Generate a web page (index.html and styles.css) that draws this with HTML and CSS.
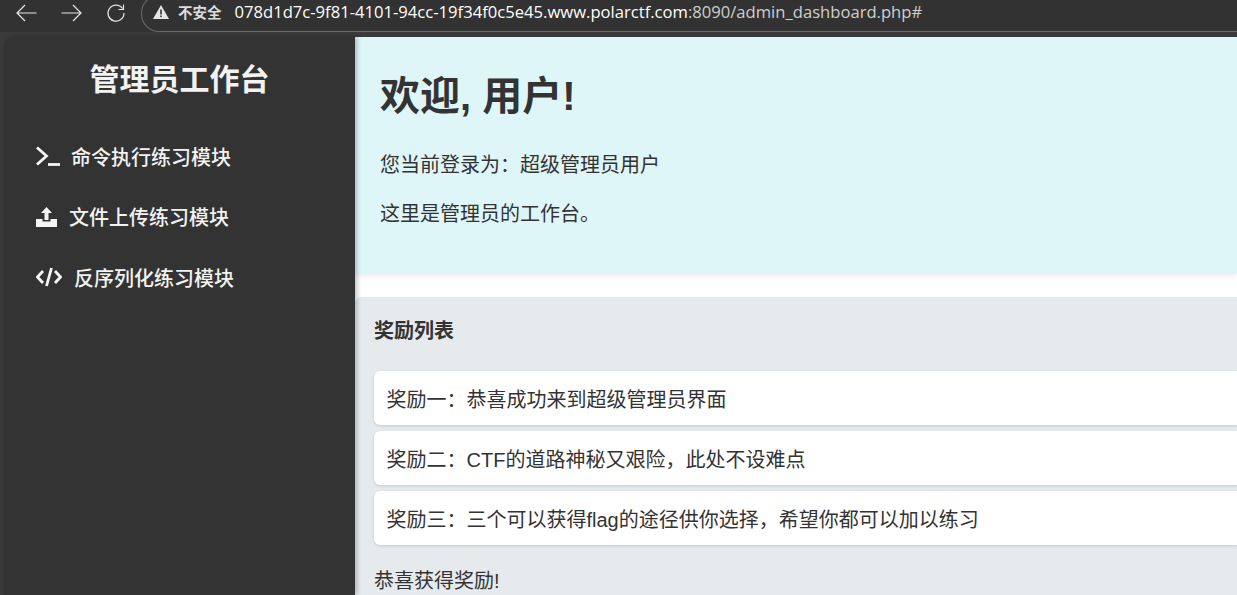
FILE: index.html
```html
<!DOCTYPE html>
<html lang="zh-CN">
<head>
<meta charset="utf-8">
<title>管理员工作台</title>
<link rel="stylesheet" href="styles.css">
</head>
<body>
<header class="toolbar">
  <nav class="nav-buttons">
    <svg class="nav-icon" viewBox="0 0 22 18"><path d="M21 9H1.500M9.500 1 1.500 9l8 8"/></svg>
    <svg class="nav-icon" viewBox="0 0 22 18"><path d="M1 9h19.500M12.500 1l8 8-8 8"/></svg>
    <svg class="nav-icon reload" viewBox="0 0 20 20"><path d="M16.500 5.500A8 8 0 1 0 18 10M17.500 1.500v5h-5"/></svg>
  </nav>
  <div class="omnibox">
    <svg class="warn" viewBox="0 0 16 14"><path d="M8 0 16 14H0Z"/><rect class="warn-mark" x="7.200" y="4.500" width="1.600" height="5"/><rect class="warn-mark" x="7.200" y="10.500" width="1.600" height="1.600"/></svg>
    <span class="insecure">不安全</span>
    <span class="url"><b class="host">078d1d7c-9f81-4101-94cc-19f34f0c5e45.www.polarctf.com</b>:8090/admin_dashboard.php#</span>
  </div>
</header>
<div class="app">
  <aside class="sidebar">
    <h2 class="brand">管理员工作台</h2>
    <ul class="menu">
      <li class="menu-item">
        <svg class="menu-icon" viewBox="0 0 24 20"><path class="stroke" d="M1 1.500l9.500 8.500L1 18.500"/><path class="stroke" d="M12 18.500h12"/></svg>
        <span class="label-a">命令执行练习模块</span>
      </li>
      <li class="menu-item">
        <svg class="menu-icon" viewBox="0 0 21 20"><path d="M10.500 0 16 6h-3.500v7h-4V6H5Z"/><path d="M0 12h6.500v2.500h8V12H21v8H0Z"/></svg>
        <span class="label-b">文件上传练习模块</span>
      </li>
      <li class="menu-item">
        <svg class="menu-icon" viewBox="0 0 26 20"><path class="stroke" d="M7 4 1.500 10 7 16M19 4l5.500 6L19 16M15.500 1l-5 18"/></svg>
        <span class="label-c">反序列化练习模块</span>
      </li>
    </ul>
  </aside>
  <main class="main">
    <section class="welcome">
      <h1 class="welcome-title">欢迎, 用户!</h1>
      <p class="welcome-text">您当前登录为：超级管理员用户</p>
      <p class="welcome-text">这里是管理员的工作台。</p>
    </section>
    <section class="rewards">
      <h3 class="rewards-title">奖励列表</h3>
      <ul class="reward-list">
        <li class="reward">奖励一：恭喜成功来到超级管理员界面</li>
        <li class="reward">奖励二：CTF的道路神秘又艰险，此处不设难点</li>
        <li class="reward">奖励三：三个可以获得flag的途径供你选择，希望你都可以加以练习</li>
      </ul>
      <p class="congrats">恭喜获得奖励!</p>
    </section>
  </main>
</div>
</body>
</html>
```
FILE: styles.css
```css
* { box-sizing: border-box; }
html, body { height: 100%; }
body {
  margin: 0;
  overflow: hidden;
  display: flex;
  flex-direction: column;
  background: #3a3a3a;
  color: #333;
  font-family: "Liberation Sans", "Noto Sans CJK SC", sans-serif;
}
.toolbar {
  height: 37px;
  flex: none;
  display: flex;
  background: linear-gradient(#323232 0, #323232 32px, #3b3b3b 32px);
  overflow: hidden;
}
.nav-buttons {
  width: 141px;
  height: 25px;
  flex: none;
  display: flex;
  align-items: center;
  gap: 22px;
  padding-left: 15px;
}
.nav-icon {
  width: 23px;
  height: 18px;
  fill: none;
  stroke: #e6e6e6;
  stroke-width: 1.200;
}
.reload { width: 20px; height: 20px; margin-left: 1px; }
.omnibox {
  height: 37px;
  margin-top: -5px;
  flex: 1;
  display: flex;
  align-items: center;
  padding: 0 0 4px 11px;
  border: 1px solid #6a6a6a;
  border-right: 0;
  border-radius: 18px 0 0 18px;
  background: #323232;
  white-space: nowrap;
}
.warn { width: 16px; height: 14px; fill: #e6e6e6; flex: none; }
.warn-mark { fill: #323232; }
.insecure {
  margin-left: 9px;
  font-size: 14.500px;
  font-weight: 700;
  color: #dcdcdc;
  font-family: "Noto Sans CJK SC", sans-serif;
}
.url {
  margin-left: 13px;
  font-family: "Open Sans", sans-serif;
  font-size: 16.630px;
  color: #cfcfcf;
}
.host { font-weight: 400; color: #fff; }
.app {
  flex: 1;
  min-height: 0;
  display: flex;
}
.sidebar {
  width: 351px;
  flex: none;
  margin-left: 4px;
  padding-top: 23px;
  background: #333;
  border-radius: 10px 0 0 0;
  color: #f2f2f2;
  box-shadow: 2px 0 5px rgba(0, 0, 0, .25);
  position: relative;
}
.brand {
  margin: 0;
  text-align: center;
  font-size: 30px;
  line-height: 40px;
  font-weight: 700;
}
.menu {
  list-style: none;
  margin: 42.400px 0 0;
  padding: 0 0 0 32px;
  display: flex;
  flex-direction: column;
  gap: 32.400px;
}
.menu-item {
  height: 28px;
  display: flex;
  align-items: center;
  font-size: 20px;
  font-weight: 500;
  color: #f2f2f2;
}
.menu-icon { width: 24px; height: 20px; fill: #f5f5f5; flex: none; }
.menu-item:nth-child(2) .menu-icon { width: 21px; }
.menu-item:nth-child(3) .menu-icon { width: 26px; }
.stroke { fill: none; stroke: #f5f5f5; stroke-width: 2.800; }
.label-a { margin-left: 11px; }
.label-b { margin-left: 12px; }
.label-c { margin-left: 12px; }
.main {
  flex: 1;
  min-width: 0;
  background: #fff;
}
.welcome {
  height: 236px;
  padding: 31px 25px 0;
  background: #dff6f9;
  box-shadow: 0 2px 6px rgba(0, 0, 0, .1);
}
.welcome-title {
  margin: 0 0 27px;
  font-size: 40px;
  line-height: 56px;
  font-weight: 700;
  color: #333;
}
.welcome-text {
  margin: 0 0 20px;
  font-size: 20px;
  line-height: 29px;
  color: #333;
}
.rewards {
  margin-top: 24px;
  padding: 20px 0 0 19px;
  height: 298px;
  background: #e7eaed;
  border-radius: 6px 0 0 0;
}
.rewards-title {
  margin: 0;
  font-size: 20px;
  line-height: 28px;
  font-weight: 700;
  color: #333;
}
.reward-list {
  list-style: none;
  margin: 26px 0 0;
  padding: 0;
  display: flex;
  flex-direction: column;
  gap: 6px;
}
.reward {
  height: 54px;
  padding-left: 12.500px;
  display: flex;
  align-items: center;
  font-size: 20px;
  color: #333;
  background: #fff;
  border-radius: 6px 0 0 6px;
  box-shadow: 0 1px 3px rgba(0, 0, 0, .15);
}
.congrats {
  margin: 22px 0 0;
  font-size: 20px;
  line-height: 29px;
  color: #333;
}
```
